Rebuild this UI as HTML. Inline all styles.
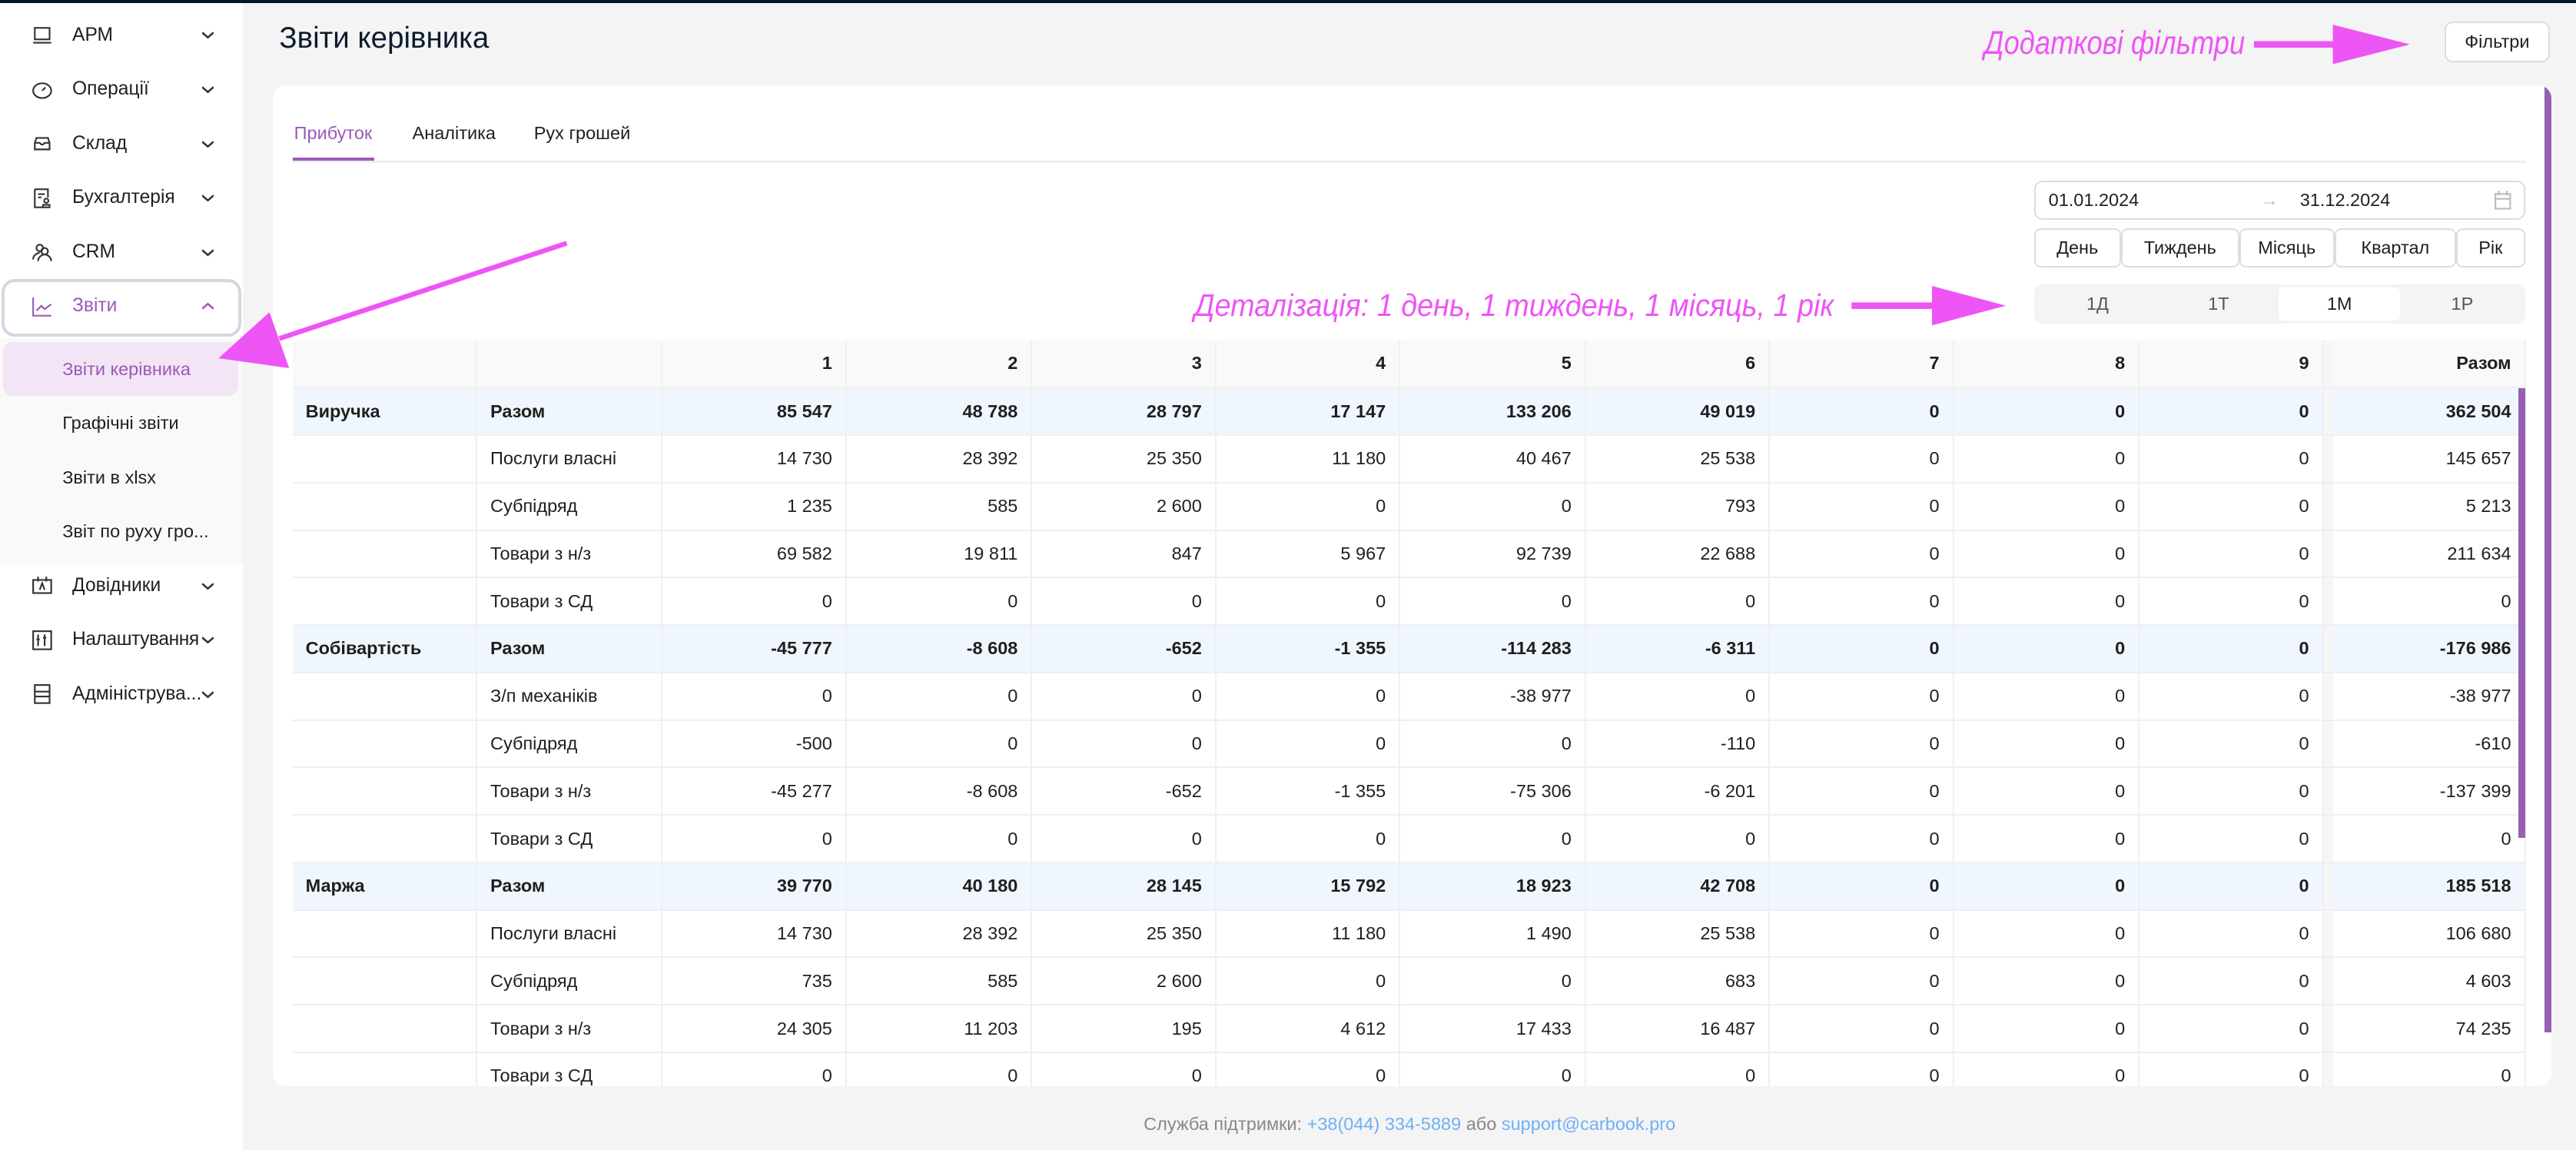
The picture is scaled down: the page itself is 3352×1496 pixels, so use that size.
<!DOCTYPE html>
<html><head><meta charset="utf-8">
<style>
*{box-sizing:border-box;margin:0;padding:0}
html,body{width:3352px;height:1496px;overflow:hidden;background:#f4f4f4}
#w{zoom:2.137755;width:1568px;height:700px;position:relative;font-family:"Liberation Sans",sans-serif;color:#1f1f1f;background:#f4f4f4;overflow:hidden}
.top{position:absolute;left:0;top:0;width:1568px;height:2px;background:#05162b}
.sb{position:absolute;left:0;top:2px;width:148px;height:698px;background:#fff}
.it{position:absolute;left:0;width:148px;height:33px;font-size:11.5px;line-height:33px}
.it .t{position:absolute;left:44px}
.it .ic{position:absolute;left:19px;top:10px;width:13px;height:13px}
.it .ch{position:absolute;left:123px;top:13px;width:7px;height:7px}
.sub{position:absolute;left:0;top:204px;width:148px;height:137px;background:#f9f9f9}
.sub div{position:absolute;left:38px;font-size:11px;height:33px;line-height:33px}
.main-title{position:absolute;left:170px;top:13px;font-size:18px;color:#0d1b2e}
.card{position:absolute;left:166px;top:52px;width:1387px;height:609px;background:#fff;border-radius:8px;overflow:hidden}
.tabs{position:absolute;left:12px;top:23px;font-size:11px}
.tabs span{position:absolute;white-space:nowrap}
table{position:absolute;left:12px;top:155px;border-collapse:collapse;table-layout:fixed;font-size:11px}
td{height:28.9px;border-bottom:1px solid #efefef;border-right:1px solid #f0f0f0;padding:0 8px;text-align:right;white-space:nowrap}
td.l{text-align:left}
tr.h td{background:#f9f9f9;font-weight:bold}
tr.g td{background:#eff6fd;font-weight:bold}
td.gap{padding:0;border-right:none;background:#f6f6f6!important}
.btn{position:absolute;top:139px;height:24px;border:1px solid #ddd;border-radius:4px;background:#fff;font-size:11px;line-height:22px;text-align:center}
.ann{position:absolute;color:#ee55f5;font-style:italic;white-space:nowrap;transform-origin:0 50%}
</style></head><body><div id="w">
<div class="top"></div>
<div class="sb">
 <div class="sub">
  <div style="left:2px;top:2px;width:143px;height:33px;background:#f2e5f5;border-radius:6px;padding-left:36px;color:#9b59b6">Звіти керівника</div>
  <div style="top:35px">Графічні звіти</div>
  <div style="top:68px">Звіти в xlsx</div>
  <div style="top:101px">Звіт по руху гро...</div>
 </div>
 <div style="position:absolute;left:1px;top:168px;width:146px;height:35px;border:2px solid #ddd3e0;border-radius:8px"></div>
</div>
<div class="it" style="top:5px"><svg class="ic" viewBox="0 0 13 13" fill="none" stroke="#333" stroke-width="1"><rect x="2" y="2" width="9" height="7"/><path d="M1 11h11"/></svg><span class="t">АРМ</span><svg class="ch" viewBox="0 0 7 7"><path d="M0 2l3.5 3L7 2" stroke="#333" fill="none" stroke-width="1.2"/></svg></div>
<div class="it" style="top:38px"><svg class="ic" viewBox="0 0 13 13" fill="none" stroke="#333" stroke-width="1"><ellipse cx="6.5" cy="7" rx="5.5" ry="4.5"/><path d="M6.5 7l2-2"/></svg><span class="t">Операції</span><svg class="ch" viewBox="0 0 7 7"><path d="M0 2l3.5 3L7 2" stroke="#333" fill="none" stroke-width="1.2"/></svg></div>
<div class="it" style="top:71px"><svg class="ic" viewBox="0 0 13 13" fill="none" stroke="#333" stroke-width="1"><path d="M3 3h7l1 3v4H2V6z M2 6h3l1 1h1l1-1h3"/></svg><span class="t">Склад</span><svg class="ch" viewBox="0 0 7 7"><path d="M0 2l3.5 3L7 2" stroke="#333" fill="none" stroke-width="1.2"/></svg></div>
<div class="it" style="top:104px"><svg class="ic" viewBox="0 0 13 13" fill="none" stroke="#333" stroke-width="1"><path d="M2 1h8v5M2 1v11h5M4 4h4M4 6h2"/><circle cx="9" cy="8" r="1.3"/><path d="M7 12h4v-1.5H7z"/></svg><span class="t">Бухгалтерія</span><svg class="ch" viewBox="0 0 7 7"><path d="M0 2l3.5 3L7 2" stroke="#333" fill="none" stroke-width="1.2"/></svg></div>
<div class="it" style="top:137px"><svg class="ic" viewBox="0 0 13 13" fill="none" stroke="#333" stroke-width="1"><circle cx="5" cy="4" r="2"/><circle cx="8" cy="6" r="2"/><path d="M1 11c0-3 3-4 4-4M4 12c0-3 3-4 4-4s4 1 4 4"/></svg><span class="t">CRM</span><svg class="ch" viewBox="0 0 7 7"><path d="M0 2l3.5 3L7 2" stroke="#333" fill="none" stroke-width="1.2"/></svg></div>
<div class="it" style="top:170px;color:#9b59b6"><svg class="ic" viewBox="0 0 13 13" fill="none" stroke="#9b59b6" stroke-width="1"><path d="M1 1v11h11M3 9l3-3 2 2 4-3"/></svg><span class="t">Звіти</span><svg class="ch" viewBox="0 0 7 7"><path d="M0 5l3.5-3L7 5" stroke="#9b59b6" fill="none" stroke-width="1.2"/></svg></div>
<div class="it" style="top:340px"><svg class="ic" viewBox="0 0 13 13" fill="none" stroke="#333" stroke-width="1"><rect x="1" y="3" width="11" height="8"/><path d="M4 1v3M9 1v3M5 9l1.5-4L8 9"/></svg><span class="t">Довідники</span><svg class="ch" viewBox="0 0 7 7"><path d="M0 2l3.5 3L7 2" stroke="#333" fill="none" stroke-width="1.2"/></svg></div>
<div class="it" style="top:373px"><svg class="ic" viewBox="0 0 13 13" fill="none" stroke="#333" stroke-width="1"><rect x="1" y="1" width="11" height="11"/><path d="M4 3v7M8 3v7M3 6h2M7 5h2"/></svg><span class="t" style="letter-spacing:-0.2px">Налаштування</span><svg class="ch" viewBox="0 0 7 7"><path d="M0 2l3.5 3L7 2" stroke="#333" fill="none" stroke-width="1.2"/></svg></div>
<div class="it" style="top:406px"><svg class="ic" viewBox="0 0 13 13" fill="none" stroke="#333" stroke-width="1"><rect x="2" y="1" width="9" height="11"/><path d="M2 5h9M2 8h9"/></svg><span class="t">Адмініструва...</span><svg class="ch" viewBox="0 0 7 7"><path d="M0 2l3.5 3L7 2" stroke="#333" fill="none" stroke-width="1.2"/></svg></div>

<div class="main-title">Звіти керівника</div>
<div class="ann" style="left:1208px;top:15px;font-size:20px;transform:scaleX(0.85)">Додаткові фільтри</div>
<div style="position:absolute;left:1488px;top:13px;width:64px;height:25px;background:#fff;border:1px solid #ddd;border-radius:5px;font-size:11px;line-height:23px;text-align:center">Фільтри</div>

<div class="card">
 <div class="tabs">
  <span style="left:1px;top:0;color:#9b59b6">Прибуток</span>
  <span style="left:73px;top:0">Аналітика</span>
  <span style="left:147px;top:0">Рух грошей</span>
 </div>
 <div style="position:absolute;left:12px;top:44px;width:50px;height:2px;background:#9b59b6"></div>
 <div style="position:absolute;left:12px;top:46px;width:1359px;height:1px;background:#eee"></div>
 <div style="position:absolute;left:1072px;top:58px;width:299px;height:24px;border:1px solid #ddd;border-radius:5px;font-size:11px;line-height:22px">
  <span style="position:absolute;left:8px">01.01.2024</span>
  <span style="position:absolute;left:137px;color:#bbb">→</span>
  <span style="position:absolute;left:161px">31.12.2024</span>
  <svg style="position:absolute;left:279px;top:5px" width="11" height="12" viewBox="0 0 11 12" fill="none" stroke="#bbb"><rect x="1" y="2" width="9" height="9"/><path d="M1 5h9M3 0v3M8 0v3"/></svg>
 </div>
 <div class="btn" style="left:1072px;top:87px;width:53px">День</div>
 <div class="btn" style="left:1125px;top:87px;width:72px">Тиждень</div>
 <div class="btn" style="left:1197px;top:87px;width:58px">Місяць</div>
 <div class="btn" style="left:1255px;top:87px;width:74px">Квартал</div>
 <div class="btn" style="left:1329px;top:87px;width:42px">Рік</div>
 <div style="position:absolute;left:1072px;top:121px;width:299px;height:24px;background:#f4f4f4;border-radius:5px;font-size:11px;line-height:24px;color:#555">
  <span style="position:absolute;left:32px">1Д</span>
  <span style="position:absolute;left:106px">1Т</span>
  <div style="position:absolute;left:149px;top:2px;width:74px;height:20px;background:#fff;border-radius:3px;text-align:center;line-height:20px;color:#222">1М</div>
  <span style="position:absolute;left:254px">1Р</span>
 </div>
 <table>
  <colgroup><col style="width:112px"><col style="width:113px"><col style="width:112px"><col style="width:113px"><col style="width:112px"><col style="width:112px"><col style="width:113px"><col style="width:112px"><col style="width:112px"><col style="width:113px"><col style="width:112px"><col style="width:6px"><col style="width:117px"></colgroup>
  <tr class="h"><td></td><td></td><td>1</td><td>2</td><td>3</td><td>4</td><td>5</td><td>6</td><td>7</td><td>8</td><td>9</td><td class="gap"></td><td>Разом</td></tr>
  <tr class="g"><td class="l">Виручка</td><td class="l">Разом</td><td>85 547</td><td>48 788</td><td>28 797</td><td>17 147</td><td>133 206</td><td>49 019</td><td>0</td><td>0</td><td>0</td><td class="gap"></td><td>362 504</td></tr>
  <tr><td></td><td class="l">Послуги власні</td><td>14 730</td><td>28 392</td><td>25 350</td><td>11 180</td><td>40 467</td><td>25 538</td><td>0</td><td>0</td><td>0</td><td class="gap"></td><td>145 657</td></tr>
  <tr><td></td><td class="l">Субпідряд</td><td>1 235</td><td>585</td><td>2 600</td><td>0</td><td>0</td><td>793</td><td>0</td><td>0</td><td>0</td><td class="gap"></td><td>5 213</td></tr>
  <tr><td></td><td class="l">Товари з н/з</td><td>69 582</td><td>19 811</td><td>847</td><td>5 967</td><td>92 739</td><td>22 688</td><td>0</td><td>0</td><td>0</td><td class="gap"></td><td>211 634</td></tr>
  <tr><td></td><td class="l">Товари з СД</td><td>0</td><td>0</td><td>0</td><td>0</td><td>0</td><td>0</td><td>0</td><td>0</td><td>0</td><td class="gap"></td><td>0</td></tr>
  <tr class="g"><td class="l">Собівартість</td><td class="l">Разом</td><td>-45 777</td><td>-8 608</td><td>-652</td><td>-1 355</td><td>-114 283</td><td>-6 311</td><td>0</td><td>0</td><td>0</td><td class="gap"></td><td>-176 986</td></tr>
  <tr><td></td><td class="l">З/п механіків</td><td>0</td><td>0</td><td>0</td><td>0</td><td>-38 977</td><td>0</td><td>0</td><td>0</td><td>0</td><td class="gap"></td><td>-38 977</td></tr>
  <tr><td></td><td class="l">Субпідряд</td><td>-500</td><td>0</td><td>0</td><td>0</td><td>0</td><td>-110</td><td>0</td><td>0</td><td>0</td><td class="gap"></td><td>-610</td></tr>
  <tr><td></td><td class="l">Товари з н/з</td><td>-45 277</td><td>-8 608</td><td>-652</td><td>-1 355</td><td>-75 306</td><td>-6 201</td><td>0</td><td>0</td><td>0</td><td class="gap"></td><td>-137 399</td></tr>
  <tr><td></td><td class="l">Товари з СД</td><td>0</td><td>0</td><td>0</td><td>0</td><td>0</td><td>0</td><td>0</td><td>0</td><td>0</td><td class="gap"></td><td>0</td></tr>
  <tr class="g"><td class="l">Маржа</td><td class="l">Разом</td><td>39 770</td><td>40 180</td><td>28 145</td><td>15 792</td><td>18 923</td><td>42 708</td><td>0</td><td>0</td><td>0</td><td class="gap"></td><td>185 518</td></tr>
  <tr><td></td><td class="l">Послуги власні</td><td>14 730</td><td>28 392</td><td>25 350</td><td>11 180</td><td>1 490</td><td>25 538</td><td>0</td><td>0</td><td>0</td><td class="gap"></td><td>106 680</td></tr>
  <tr><td></td><td class="l">Субпідряд</td><td>735</td><td>585</td><td>2 600</td><td>0</td><td>0</td><td>683</td><td>0</td><td>0</td><td>0</td><td class="gap"></td><td>4 603</td></tr>
  <tr><td></td><td class="l">Товари з н/з</td><td>24 305</td><td>11 203</td><td>195</td><td>4 612</td><td>17 433</td><td>16 487</td><td>0</td><td>0</td><td>0</td><td class="gap"></td><td>74 235</td></tr>
  <tr><td></td><td class="l">Товари з СД</td><td>0</td><td>0</td><td>0</td><td>0</td><td>0</td><td>0</td><td>0</td><td>0</td><td>0</td><td class="gap"></td><td>0</td></tr>
 </table>
 <div style="position:absolute;left:1367px;top:184px;width:4px;height:274px;background:#9560b3"></div>
 <div style="position:absolute;left:1383px;top:0;width:4px;height:576px;background:#9560b3"></div>
</div>
<div class="ann" style="left:727px;top:175px;font-size:19px;transform:scaleX(0.93)">Деталізація: 1 день, 1 тиждень, 1 місяць, 1 рік</div>
<svg style="position:absolute;left:0;top:0" width="1568" height="700">
 <path d="M1372 27H1422" stroke="#ee55f5" stroke-width="4"/><path d="M1420 15L1467 27L1420 39Z" fill="#ee55f5"/>
 <path d="M1127 186H1178" stroke="#ee55f5" stroke-width="4"/><path d="M1176 174L1221 186L1176 198Z" fill="#ee55f5"/>
 <path d="M345 148L170 206" stroke="#ee55f5" stroke-width="3"/><path d="M133 218L164 190L176 224Z" fill="#ee55f5"/>
</svg>
<div style="position:absolute;left:0;width:1716px;top:678px;text-align:center;font-size:11px;color:#888">Служба підтримки: <span style="color:#6fb0f5">+38(044) 334-5889</span> або <span style="color:#6fb0f5">support@carbook.pro</span></div>
</div></body></html>
